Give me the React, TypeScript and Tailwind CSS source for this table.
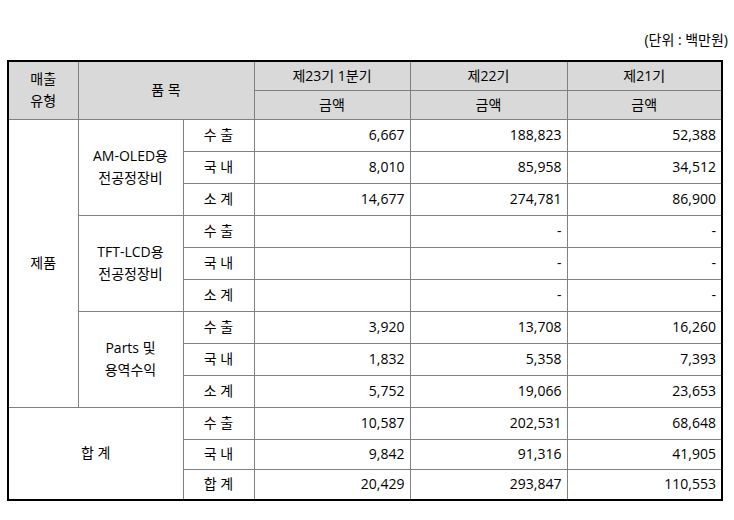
import React from 'react';

type Row = { label: string; values: string[] };

const groups: { name: string[]; rows: Row[] }[] = [
  {
    name: ['AM-OLED용', '전공정장비'],
    rows: [
      { label: '수 출', values: ['6,667', '188,823', '52,388'] },
      { label: '국 내', values: ['8,010', '85,958', '34,512'] },
      { label: '소 계', values: ['14,677', '274,781', '86,900'] },
    ],
  },
  {
    name: ['TFT-LCD용', '전공정장비'],
    rows: [
      { label: '수 출', values: ['', '-', '-'] },
      { label: '국 내', values: ['', '-', '-'] },
      { label: '소 계', values: ['', '-', '-'] },
    ],
  },
  {
    name: ['Parts 및', '용역수익'],
    rows: [
      { label: '수 출', values: ['3,920', '13,708', '16,260'] },
      { label: '국 내', values: ['1,832', '5,358', '7,393'] },
      { label: '소 계', values: ['5,752', '19,066', '23,653'] },
    ],
  },
];

const totals: Row[] = [
  { label: '수 출', values: ['10,587', '202,531', '68,648'] },
  { label: '국 내', values: ['9,842', '91,316', '41,905'] },
  { label: '합 계', values: ['20,429', '293,847', '110,553'] },
];

const cell = 'border border-[#808080] px-[4px] text-center';
const num = 'border border-[#808080] pl-[4px] pr-[5px] text-right';

export default function App() {
  return (
    <div
      className="w-[734px] h-[520px] bg-white text-black text-[14px] pl-[7px] pt-[29px]"
      style={{ fontFamily: '"Open Sans", "Noto Sans CJK KR", sans-serif' }}
    >
      <div className="w-[721px] text-right leading-[22px]">(단위 : 백만원)</div>
      <table className="mt-[9px] w-[714px] border-collapse border-2 border-black table-fixed leading-[22px]">
        <colgroup>
          <col className="w-[70px]" />
          <col className="w-[105px]" />
          <col className="w-[71px]" />
          <col className="w-[156px]" />
          <col className="w-[157px]" />
          <col className="w-[155px]" />
        </colgroup>
        <thead className="bg-[#d9d9d9]">
          <tr className="h-[29px]">
            <th rowSpan={2} className={`${cell} font-normal`}>
              <div>매출</div>
              <div>유형</div>
            </th>
            <th rowSpan={2} colSpan={2} className={`${cell} font-normal`}>
              품 목
            </th>
            <th className={`${cell} font-normal`}>제23기 1분기</th>
            <th className={`${cell} font-normal`}>제22기</th>
            <th className={`${cell} font-normal`}>제21기</th>
          </tr>
          <tr className="h-[29px]">
            <th className={`${cell} font-normal`}>금액</th>
            <th className={`${cell} font-normal`}>금액</th>
            <th className={`${cell} font-normal`}>금액</th>
          </tr>
        </thead>
        <tbody>
          {groups.map((g, gi) =>
            g.rows.map((r, ri) => (
              <tr key={`${gi}-${ri}`} className="h-[32px]">
                {gi === 0 && ri === 0 && (
                  <td rowSpan={9} className={cell}>
                    제품
                  </td>
                )}
                {ri === 0 && (
                  <td rowSpan={3} className={cell}>
                    <div>{g.name[0]}</div>
                    <div>{g.name[1]}</div>
                  </td>
                )}
                <td className={cell}>{r.label}</td>
                {r.values.map((v, vi) => (
                  <td key={vi} className={num}>
                    {v}
                  </td>
                ))}
              </tr>
            ))
          )}
          {totals.map((r, ri) => (
            <tr key={`t-${ri}`} className={ri === 2 ? 'h-[31px]' : ri === 1 ? 'h-[30px]' : 'h-[32px]'}>
              {ri === 0 && (
                <td rowSpan={3} colSpan={2} className={cell}>
                  합 계
                </td>
              )}
              <td className={cell}>{r.label}</td>
              {r.values.map((v, vi) => (
                <td key={vi} className={num}>
                  {v}
                </td>
              ))}
            </tr>
          ))}
        </tbody>
      </table>
    </div>
  );
}
